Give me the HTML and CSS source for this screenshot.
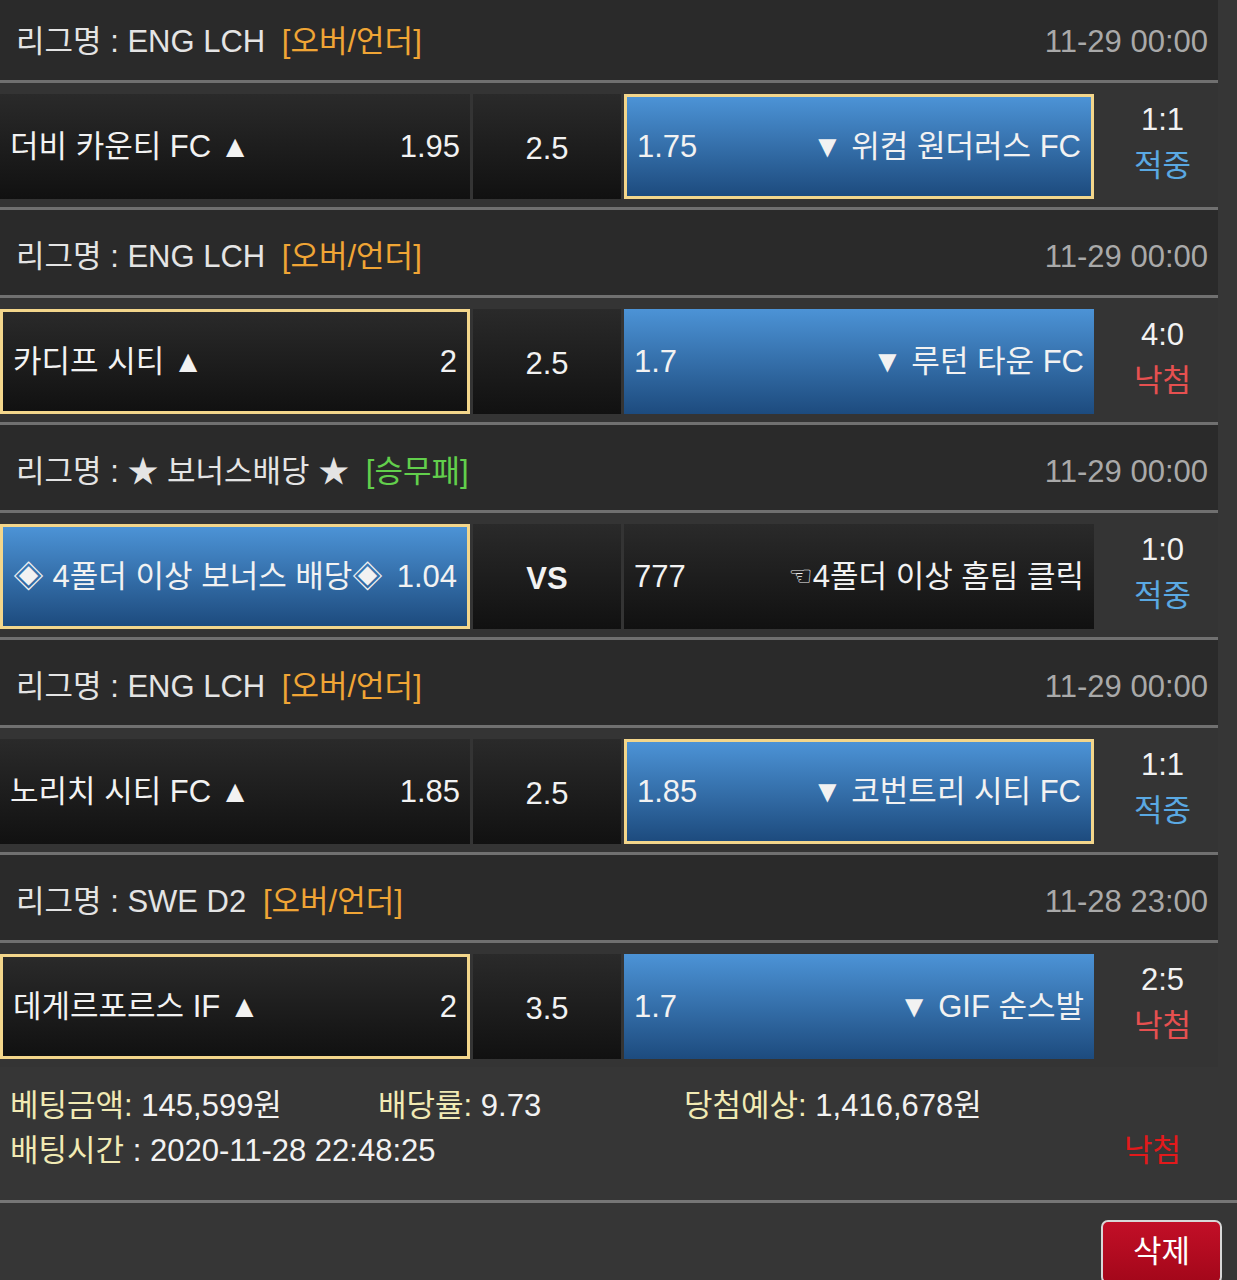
FILE: index.html
```html
<!DOCTYPE html>
<html lang="ko">
<head>
  <meta charset="UTF-8"/>
  <meta name="viewport" content="width=device-width, initial-scale=1.0"/>
  <title>베팅내역</title>
  <link rel="stylesheet" href="styles.css">
</head>
<body>
  <div class="slip">
    <div class="games">

      <div class="game">
        <div class="league">
          <div>리그명 : ENG LCH <span class="type ou">[오버/언더]</span></div>
          <div class="time">11-29 00:00</div>
        </div>
        <div class="match">
          <div class="pick"><span>더비 카운티 FC ▲</span><span>1.95</span></div>
          <div class="mid">2.5</div>
          <div class="pick blue win"><span>1.75</span><span>▼ 위컴 원더러스 FC</span></div>
          <div class="result"><span>1:1</span><span class="hit">적중</span></div>
        </div>
      </div>

      <div class="game">
        <div class="league">
          <div>리그명 : ENG LCH <span class="type ou">[오버/언더]</span></div>
          <div class="time">11-29 00:00</div>
        </div>
        <div class="match">
          <div class="pick win"><span>카디프 시티 ▲</span><span>2</span></div>
          <div class="mid">2.5</div>
          <div class="pick blue"><span>1.7</span><span>▼ 루턴 타운 FC</span></div>
          <div class="result"><span>4:0</span><span class="miss">낙첨</span></div>
        </div>
      </div>

      <div class="game">
        <div class="league">
          <div>리그명 : ★ 보너스배당 ★ <span class="type wdl">[승무패]</span></div>
          <div class="time">11-29 00:00</div>
        </div>
        <div class="match">
          <div class="pick blue win"><span>◈ 4폴더 이상 보너스 배당◈</span><span>1.04</span></div>
          <div class="mid vs">VS</div>
          <div class="pick"><span>777</span><span><span class="hand">☜</span>4폴더 이상 홈팀 클릭</span></div>
          <div class="result"><span>1:0</span><span class="hit">적중</span></div>
        </div>
      </div>

      <div class="game">
        <div class="league">
          <div>리그명 : ENG LCH <span class="type ou">[오버/언더]</span></div>
          <div class="time">11-29 00:00</div>
        </div>
        <div class="match">
          <div class="pick"><span>노리치 시티 FC ▲</span><span>1.85</span></div>
          <div class="mid">2.5</div>
          <div class="pick blue win"><span>1.85</span><span>▼ 코번트리 시티 FC</span></div>
          <div class="result"><span>1:1</span><span class="hit">적중</span></div>
        </div>
      </div>

      <div class="game">
        <div class="league">
          <div>리그명 : SWE D2 <span class="type ou">[오버/언더]</span></div>
          <div class="time">11-28 23:00</div>
        </div>
        <div class="match">
          <div class="pick win"><span>데게르포르스 IF ▲</span><span>2</span></div>
          <div class="mid">3.5</div>
          <div class="pick blue"><span>1.7</span><span>▼ GIF 순스발</span></div>
          <div class="result"><span>2:5</span><span class="miss">낙첨</span></div>
        </div>
      </div>

    </div>

    <div class="summary">
      <div class="sum-row">
        <div class="amount"><span class="label">베팅금액:</span> 145,599원</div>
        <div class="rate"><span class="label">배당률:</span> 9.73</div>
        <div><span class="label">당첨예상:</span> 1,416,678원</div>
      </div>
      <div class="sum-row spread">
        <div><span class="label">배팅시간</span> : 2020-11-28 22:48:25</div>
        <div class="lost">낙첨</div>
      </div>
    </div>

    <div class="actions">
      <button class="delete-btn">삭제</button>
    </div>
  </div>
</body>
</html>
```

FILE: styles.css
```css
* {
  box-sizing: border-box;
  margin: 0;
  padding: 0;
}

body {
  background: #363636;
  color: #f2f2f2;
  font-family: 'Liberation Sans', Arial, 'Noto Sans CJK KR', sans-serif;
  font-size: 31px;
  line-height: 1.2;
  overflow: hidden;
}

.slip {
  margin-top: -5px;
}

.games {
  width: 1218px;
}

.game {
  border-bottom: 3px solid #707070;
}

.game:last-child {
  border-bottom: none;
}

.league {
  height: 88px;
  padding: 9px 10px 0 16px;
  background: #2a2a2a;
  border-bottom: 3px solid #707070;
  display: flex;
  justify-content: space-between;
  align-items: center;
  color: #e4e4e4;
}

.type {
  margin-left: 8px;
}

.ou {
  color: #f0a535;
}

.wdl {
  color: #62cf4c;
}

.time {
  color: #a9a9a9;
}

.match {
  height: 124px;
  padding: 11px 0 8px;
  background: #343434;
  display: grid;
  grid-template-columns: 470px 148px 470px 1fr;
  column-gap: 3px;
}

.pick,
.mid {
  background: linear-gradient(#2a2a2a, #111111);
  display: flex;
  align-items: center;
}

.pick {
  justify-content: space-between;
  padding: 0 10px;
  white-space: nowrap;
}

.pick.blue {
  background: linear-gradient(#4c93d6, #1d4b7e);
}

.pick.win {
  border: 3px solid #f3d68b;
}

.mid {
  justify-content: center;
  padding-top: 4px;
}

.mid.vs {
  font-weight: bold;
}

.hand {
  font-family: 'DejaVu Sans', sans-serif;
  font-size: 27px;
  vertical-align: 2px;
}

.result {
  display: flex;
  flex-direction: column;
  align-items: center;
  justify-content: center;
  padding: 0 0 8px 10px;
  line-height: 46px;
}

.hit {
  color: #5aa9e3;
}

.miss {
  color: #e65050;
}

.summary {
  padding: 16px 56px 27px 10px;
  border-bottom: 3px solid #767676;
  line-height: 45px;
}

.sum-row {
  display: flex;
}

.sum-row.spread {
  justify-content: space-between;
}

.amount {
  width: 368px;
}

.rate {
  width: 306px;
}

.label {
  color: #f1eab4;
}

.lost {
  color: #e3191b;
}

.actions {
  display: flex;
  justify-content: flex-end;
  padding: 17px 15px 0 0;
}

.delete-btn {
  width: 121px;
  height: 64px;
  background: linear-gradient(#c20f27, #a3071a);
  border: 2px solid #d8d8d8;
  border-radius: 7px;
  color: #fff;
  font-family: inherit;
  font-size: 31px;
  padding-bottom: 8px;
}
```
